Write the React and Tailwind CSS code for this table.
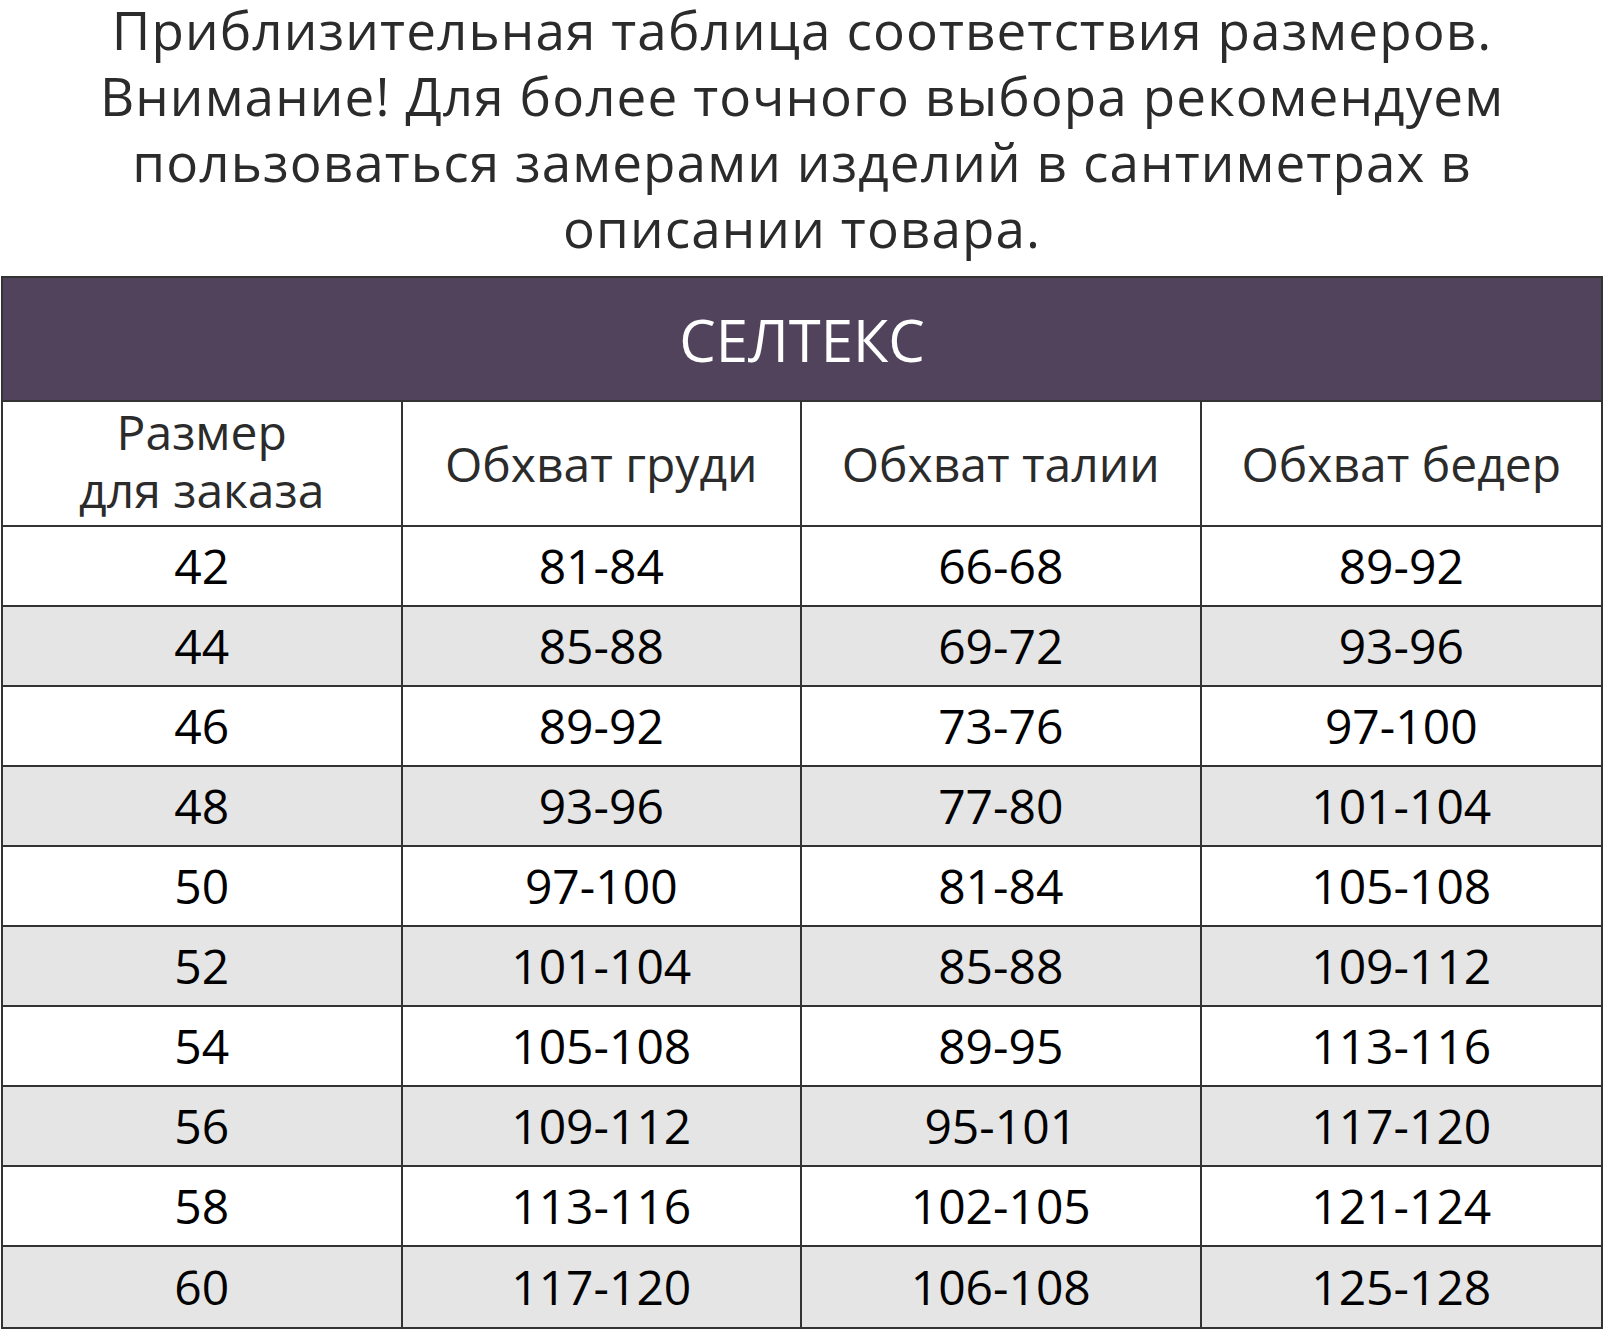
import React from "react";

const rows = [
  ["42", "81-84", "66-68", "89-92"],
  ["44", "85-88", "69-72", "93-96"],
  ["46", "89-92", "73-76", "97-100"],
  ["48", "93-96", "77-80", "101-104"],
  ["50", "97-100", "81-84", "105-108"],
  ["52", "101-104", "85-88", "109-112"],
  ["54", "105-108", "89-95", "113-116"],
  ["56", "109-112", "95-101", "117-120"],
  ["58", "113-116", "102-105", "121-124"],
  ["60", "117-120", "106-108", "125-128"],
];

export default function App() {
  return (
    <div className="w-[1604px] h-[1329px] bg-white overflow-hidden" style={{ fontFamily: '"Open Sans", "Noto Sans", sans-serif' }}>
      <div className="h-[276px] flex flex-col">
        <p className="-mt-[3px] text-center text-[#2b2b2b] text-[53px] leading-[66px] tracking-[1.1px]">
          Приблизительная таблица соответствия размеров.
          <br />
          Внимание! Для более точного выбора рекомендуем
          <br />
          пользоваться замерами изделий в сантиметрах в
          <br />
          описании товара.
        </p>
      </div>
      <div className="ml-px w-[1602px] border-2 border-[#333333]">
        <div className="h-[124px] bg-[#51435c] border-b-2 border-[#333333] flex items-center justify-center text-white text-[58px]">
          СЕЛТЕКС
        </div>
        <div className="grid grid-cols-4 h-[125px] border-b-2 border-[#333333] text-[#2b2b2b] text-[48px] leading-[58px]">
          <div className="border-r-2 border-[#333333] flex items-center justify-center text-center">
            <span className="-mt-[6px]">Размер<br />для заказа</span>
          </div>
          <div className="border-r-2 border-[#333333] flex items-center justify-center">Обхват груди</div>
          <div className="border-r-2 border-[#333333] flex items-center justify-center">Обхват талии</div>
          <div className="flex items-center justify-center">Обхват бедер</div>
        </div>
        {rows.map((r, i) => (
          <div
            key={i}
            className={
              "grid grid-cols-4 h-[80px] text-black text-[48px] " +
              (i % 2 === 1 ? "bg-[#e4e5e4] " : "bg-white ") +
              (i < rows.length - 1 ? "border-b-2 border-[#333333]" : "")
            }
          >
            {r.map((c, j) => (
              <div
                key={j}
                className={
                  "flex items-center justify-center " +
                  (j < 3 ? "border-r-2 border-[#333333]" : "")
                }
              >
                {c}
              </div>
            ))}
          </div>
        ))}
      </div>
    </div>
  );
}
